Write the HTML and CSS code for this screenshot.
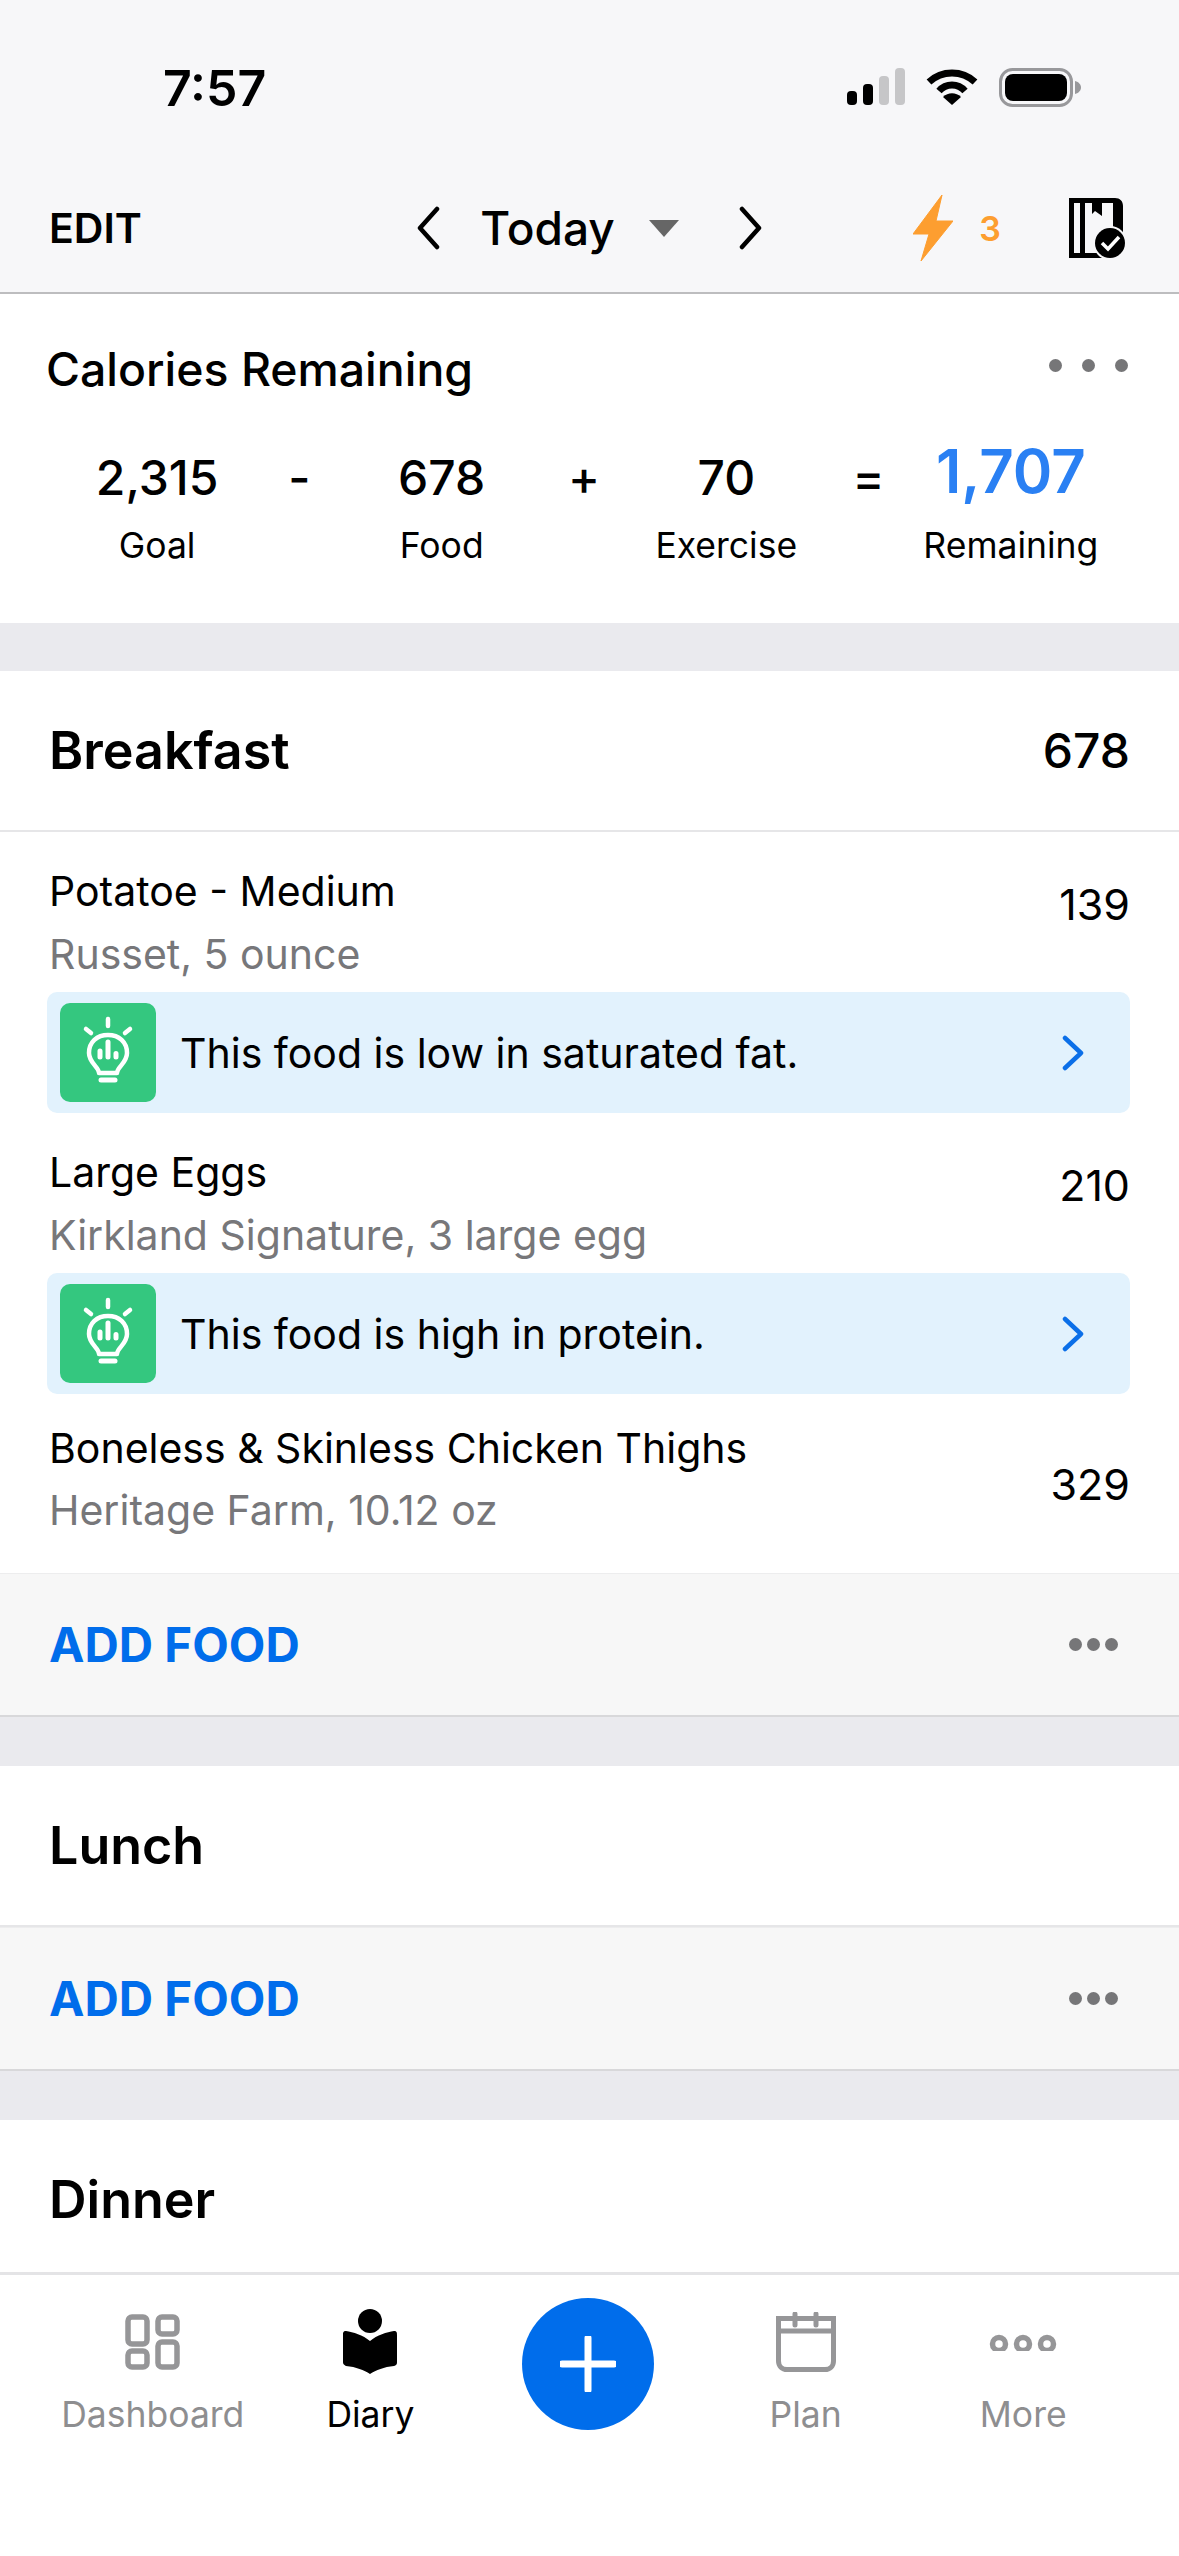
FILE: index.html
```html
<!DOCTYPE html>
<html lang="en">
<head>
  <meta charset="UTF-8" />
  <meta name="viewport" content="width=device-width, initial-scale=1" />
  <title>Diary</title>
  <link rel="stylesheet" href="styles.css">
</head>
<body>
  <div class="app">
    <header class="top">
      <div class="status">
        <span class="time">7:57</span>
        <div class="status-icons">
          <svg class="signal" width="58" height="38" viewBox="0 0 58 38">
            <rect x="0" y="23" width="10" height="14" rx="4" fill="#000"/>
            <rect x="16" y="16" width="10" height="21" rx="4" fill="#000"/>
            <rect x="32" y="8" width="10" height="29" rx="4" fill="#c6c6c8"/>
            <rect x="48" y="0" width="10" height="37" rx="4" fill="#c6c6c8"/>
          </svg>
          <svg class="wifi" width="52" height="38" viewBox="0 0 52 38">
            <path d="M3 14C16 2 36 2 49 14" fill="none" stroke="#000" stroke-width="7"/>
            <path d="M13 23C20 15 32 15 39 23" fill="none" stroke="#000" stroke-width="7"/>
            <path d="M26 37L17 29C22 24 30 24 35 29Z" fill="#000"/>
          </svg>
          <svg class="battery" width="82" height="40" viewBox="0 0 82 40">
            <rect x="1.5" y="1.5" width="71" height="36" rx="12" fill="none" stroke="#98989b" stroke-width="3"/>
            <rect x="6" y="6" width="62" height="27" rx="8" fill="#000"/>
            <path d="M76 13C80 14 82 17 82 19.500C82 22 80 25 76 26Z" fill="#98989b"/>
          </svg>
        </div>
      </div>
      <nav class="nav">
        <div class="nav-left">EDIT</div>
        <div class="nav-date">
          <svg width="24" height="44" viewBox="0 0 24 44"><path d="M21 3L4 22L21 41" fill="none" stroke="#000" stroke-width="4.500" stroke-linecap="round" stroke-linejoin="round"/></svg>
          <span class="today">Today</span>
          <span class="caret"></span>
          <svg width="24" height="44" viewBox="0 0 24 44"><path d="M3 3L20 22L3 41" fill="none" stroke="#000" stroke-width="4.500" stroke-linecap="round" stroke-linejoin="round"/></svg>
        </div>
        <div class="nav-right">
          <svg width="40" height="66" viewBox="0 0 40 66"><path d="M29 0L0 39H16L8 66L40 26H23Z" fill="#fd9e30" stroke="#fd9e30" stroke-width="1" stroke-linejoin="round"/></svg>
          <span class="streak">3</span>
          <svg class="plan-icon" width="56" height="60" viewBox="0 0 56 60">
            <path d="M0 0H46C51 0 54 3 54 8V36H44V5H33V18L26 13L23 16V5H16V55H34V60H0ZM5 5V55H11V5Z" fill="#000" fill-rule="evenodd"/>
            <circle cx="41" cy="45" r="17" fill="#f7f7f9"/>
            <circle cx="41" cy="45" r="15" fill="#000"/>
            <path d="M33 45L39 51L50 39" fill="none" stroke="#fff" stroke-width="3.500"/>
          </svg>
        </div>
      </nav>
    </header>

    <section class="summary">
      <div class="summary-head">
        <h2>Calories Remaining</h2>
        <div class="dots"><i></i><i></i><i></i></div>
      </div>
      <div class="summary-grid">
        <div class="cell"><b>2,315</b><span>Goal</span></div>
        <div class="cell op"><b>-</b></div>
        <div class="cell"><b>678</b><span>Food</span></div>
        <div class="cell op"><b>+</b></div>
        <div class="cell"><b>70</b><span>Exercise</span></div>
        <div class="cell op"><b>=</b></div>
        <div class="cell remaining"><b>1,707</b><span>Remaining</span></div>
      </div>
    </section>

    <div class="gap"></div>

    <section class="meal">
      <div class="meal-head"><h3>Breakfast</h3><span>678</span></div>
      <div class="food">
        <div class="food-row">
          <div><div class="food-name">Potatoe - Medium</div><div class="food-sub">Russet, 5 ounce</div></div>
          <div class="food-cal">139</div>
        </div>
        <a class="tip">
          <span class="tip-icon">
            <svg width="54" height="76" viewBox="0 0 54 76">
              <g fill="none" stroke="#fff" stroke-linecap="round">
                <path d="M27 4V11M5 14L10 18M49 14L44 18" stroke-width="4.500"/>
                <path d="M18 58C18 52 8 48 8 38C8 27 16 20 27 20C38 20 46 27 46 38C46 48 36 52 36 58Z" stroke-width="4.500" stroke-linejoin="round"/>
                <path d="M20 65H34" stroke-width="5"/>
                <path d="M19 36V42M27 27V42M35 38.500V42" stroke-width="5"/>
              </g>
            </svg>
          </span>
          <span class="tip-text">This food is low in saturated fat.</span>
          <svg class="tip-arrow" width="22" height="36" viewBox="0 0 22 36"><path d="M3 3L19 18L3 33" fill="none" stroke="#0b6fe8" stroke-width="4.500" stroke-linecap="round" stroke-linejoin="round"/></svg>
        </a>
      </div>
      <div class="food">
        <div class="food-row">
          <div><div class="food-name">Large Eggs</div><div class="food-sub">Kirkland Signature, 3 large egg</div></div>
          <div class="food-cal">210</div>
        </div>
        <a class="tip">
          <span class="tip-icon">
            <svg width="54" height="76" viewBox="0 0 54 76">
              <g fill="none" stroke="#fff" stroke-linecap="round">
                <path d="M27 4V11M5 14L10 18M49 14L44 18" stroke-width="4.500"/>
                <path d="M18 58C18 52 8 48 8 38C8 27 16 20 27 20C38 20 46 27 46 38C46 48 36 52 36 58Z" stroke-width="4.500" stroke-linejoin="round"/>
                <path d="M20 65H34" stroke-width="5"/>
                <path d="M19 36V42M27 27V42M35 38.500V42" stroke-width="5"/>
              </g>
            </svg>
          </span>
          <span class="tip-text">This food is high in protein.</span>
          <svg class="tip-arrow" width="22" height="36" viewBox="0 0 22 36"><path d="M3 3L19 18L3 33" fill="none" stroke="#0b6fe8" stroke-width="4.500" stroke-linecap="round" stroke-linejoin="round"/></svg>
        </a>
      </div>
      <div class="food food-last">
        <div class="food-row">
          <div><div class="food-name">Boneless &amp; Skinless Chicken Thighs</div><div class="food-sub">Heritage Farm, 10.12 oz</div></div>
          <div class="food-cal">329</div>
        </div>
      </div>
      <div class="add-row"><span class="add">ADD FOOD</span><div class="dots small"><i></i><i></i><i></i></div></div>
    </section>

    <div class="gap small-gap"></div>

    <section class="meal">
      <div class="meal-head"><h3>Lunch</h3></div>
      <div class="add-row"><span class="add">ADD FOOD</span><div class="dots small"><i></i><i></i><i></i></div></div>
    </section>

    <div class="gap small-gap"></div>

    <section class="meal meal-open">
      <div class="meal-head"><h3>Dinner</h3></div>
    </section>

    <footer class="tabs">
      <div class="tab">
        <div class="tab-icon">
          <svg width="56" height="56" viewBox="0 0 56 56">
            <g fill="none" stroke="#969698" stroke-width="5.500">
              <rect x="3" y="3" width="19" height="27" rx="4"/>
              <rect x="33" y="3" width="19" height="17" rx="4"/>
              <rect x="3" y="37" width="19" height="16" rx="4"/>
              <rect x="33" y="28" width="19" height="25" rx="4"/>
            </g>
          </svg>
        </div>
        <span>Dashboard</span>
      </div>
      <div class="tab tab-on">
        <div class="tab-icon">
          <svg width="56" height="66" viewBox="0 0 56 66">
            <circle cx="28" cy="12" r="12" fill="#000"/>
            <path d="M28 32C21 26 11 23 4 22C1 22 1 24 1 26V53C1 56 3 56 4 57C14 58 22 61 28 65C34 61 42 58 52 57C54 56 55 56 55 53V26C55 24 55 22 52 22C45 23 35 26 28 32Z" fill="#000"/>
          </svg>
        </div>
        <span>Diary</span>
      </div>
      <div class="tab tab-add">
        <div class="add-btn">
          <svg width="56" height="56" viewBox="0 0 56 56"><path d="M28 2V54M2 28H54" stroke="#fff" stroke-width="7" stroke-linecap="round"/></svg>
        </div>
      </div>
      <div class="tab">
        <div class="tab-icon">
          <svg width="60" height="60" viewBox="0 0 60 60">
            <path d="M2.500 6.500H57.500V49C57.500 54 54 57.500 49 57.500H11C6 57.500 2.500 54 2.500 49ZM2.500 19H57.500" fill="none" stroke="#969698" stroke-width="5"/>
            <path d="M19 2V13M40 2V13" stroke="#969698" stroke-width="5" stroke-linecap="round"/>
          </svg>
        </div>
        <span>Plan</span>
      </div>
      <div class="tab">
        <div class="tab-icon">
          <svg width="68" height="56" viewBox="0 0 68 56">
            <g fill="none" stroke="#969698" stroke-width="5.500">
              <circle cx="10" cy="30" r="6.500"/>
              <circle cx="34" cy="30" r="6.500"/>
              <circle cx="58" cy="30" r="6.500"/>
            </g>
            <rect x="0" y="37" width="68" height="6" fill="#fff"/>
          </svg>
        </div>
        <span>More</span>
      </div>
    </footer>
  </div>
</body>
</html>
```

FILE: styles.css
```css
* {
  box-sizing: border-box;
}
html, body {
  margin: 0;
  padding: 0;
}
body {
  font-family: Inter, "Liberation Sans", sans-serif;
  color: #000;
  background: #fff;
}
h2, h3 {
  margin: 0;
  font-weight: 400;
}
svg {
  display: block;
  flex: none;
}
.app {
  width: 1179px;
  height: 2556px;
  display: flex;
  flex-direction: column;
  overflow: hidden;
}

/* top bar */
.top {
  height: 294px;
  background: #f7f7f9;
  border-bottom: 2px solid #bdbdbf;
}
.status {
  height: 164px;
  padding: 60px 98px 0 163px;
  display: flex;
  justify-content: space-between;
  align-items: flex-start;
}
.time {
  font-size: 50px;
  line-height: 56px;
  font-weight: 600;
}
.status-icons {
  display: flex;
  gap: 21px;
  margin-top: 8px;
}
.nav {
  height: 128px;
  display: grid;
  grid-template-columns: 1fr auto 1fr;
  align-items: center;
  padding: 0 54px;
}
.nav-left {
  font-size: 41px;
  font-weight: 600;
  margin-left: -5px;
}
.nav-date {
  display: flex;
  align-items: center;
}
.today {
  font-size: 46px;
  font-weight: 500;
  margin-left: 40px;
}
.caret {
  width: 0;
  height: 0;
  margin: 0 60px 0 34px;
  border-left: 15px solid transparent;
  border-right: 15px solid transparent;
  border-top: 17px solid #666;
}
.nav-right {
  display: flex;
  align-items: center;
  justify-content: flex-end;
}
.streak {
  color: #fd9e30;
  font-size: 34px;
  font-weight: 600;
  margin: 0 68px 0 26px;
}

/* summary card */
.summary {
  height: 329px;
  padding: 47px 51px 0 46px;
}
.summary-head {
  display: flex;
  justify-content: space-between;
  align-items: flex-start;
}
.summary-head h2 {
  font-size: 46.400px;
  line-height: 56px;
  font-weight: 450;
}
.dots {
  display: flex;
  gap: 20px;
  margin-top: 18px;
}
.dots i {
  width: 13px;
  height: 13px;
  border-radius: 50%;
  background: #767678;
}
.dots.small {
  gap: 5px;
  margin-top: 0;
  margin-right: 2px;
}
.summary-grid {
  display: grid;
  grid-template-columns: repeat(7, minmax(0, 1fr));
  margin: 41px 46px 0 40px;
}
.cell {
  display: flex;
  flex-direction: column;
  align-items: center;
  white-space: nowrap;
}
.cell b {
  height: 80px;
  font-size: 48px;
  line-height: 80px;
  font-weight: 450;
}
.cell span {
  font-size: 35.500px;
  line-height: 44px;
  margin-top: 6px;
}
.remaining b {
  color: #2a80f3;
  font-size: 60px;
  font-weight: 600;
  line-height: 66px;
}

.gap {
  height: 48px;
  background: #eaeaee;
  flex: none;
}
.small-gap {
  height: 49px;
}

/* meals */
.meal {
  flex: none;
}
.meal-open {
  height: 152px;
}
.meal-head {
  height: 161px;
  padding: 0 49px;
  display: flex;
  justify-content: space-between;
  align-items: center;
  border-bottom: 2px solid #e6e6e8;
}
.meal-open .meal-head {
  border-bottom: none;
  height: 152px;
  padding-top: 6px;
}
.meal-head h3 {
  font-size: 52px;
  font-weight: 600;
}
.meal-head span {
  font-size: 48px;
  font-weight: 450;
}
.food {
  padding: 36px 49px 0;
}
.food-row {
  display: flex;
  justify-content: space-between;
  align-items: flex-start;
}
.food-name {
  font-size: 41px;
  line-height: 48px;
  margin-top: -1px;
}
.food-sub {
  font-size: 41px;
  line-height: 48px;
  margin-top: 15px;
  color: #77777a;
}
.food-cal {
  font-size: 43px;
  font-weight: 400;
  line-height: 48px;
  margin-top: 12px;
}
.tip {
  display: flex;
  align-items: center;
  height: 121px;
  margin: 14px 0 0 -2px;
  padding: 0 46px 0 13px;
  background: #e2f2fd;
  border-radius: 10px;
}
.tip-icon {
  width: 96px;
  height: 99px;
  flex: none;
  display: flex;
  align-items: center;
  justify-content: center;
  background: #34c77f;
  border-radius: 10px;
}
.tip-text {
  flex: 1;
  margin-left: 24px;
  font-size: 41px;
}
.food-last {
  padding-top: 31px;
  padding-bottom: 39px;
}
.food-last .food-row {
  align-items: center;
}
.food-last .food-sub {
  margin-top: 14px;
}
.food-last .food-cal {
  margin-top: 8px;
}
.add-row {
  height: 144px;
  padding: 0 59px 0 49px;
  display: flex;
  justify-content: space-between;
  align-items: center;
  background: #f7f7f7;
  border-bottom: 2px solid #d8d8da;
  border-top: 1px solid #ededee;
}
.add {
  font-size: 47.500px;
  font-weight: 700;
  color: #006deb;
}

/* bottom tabs */
.tabs {
  flex: 1;
  border-top: 3px solid #e4e4e6;
  padding: 0 47px 0 44px;
  display: grid;
  grid-template-columns: repeat(5, minmax(0, 1fr));
}
.tab {
  height: 170px;
  padding-top: 32px;
  display: flex;
  flex-direction: column;
  align-items: center;
  color: #8e8e90;
  font-size: 35.500px;
  line-height: 44px;
  gap: 16px;
}
.tab-icon {
  height: 70px;
  display: flex;
  align-items: center;
  justify-content: center;
}
.tab-on {
  color: #000;
}
.tab-add {
  padding-top: 23px;
}
.add-btn {
  width: 132px;
  height: 132px;
  border-radius: 50%;
  background: #006deb;
  display: flex;
  align-items: center;
  justify-content: center;
}
```
